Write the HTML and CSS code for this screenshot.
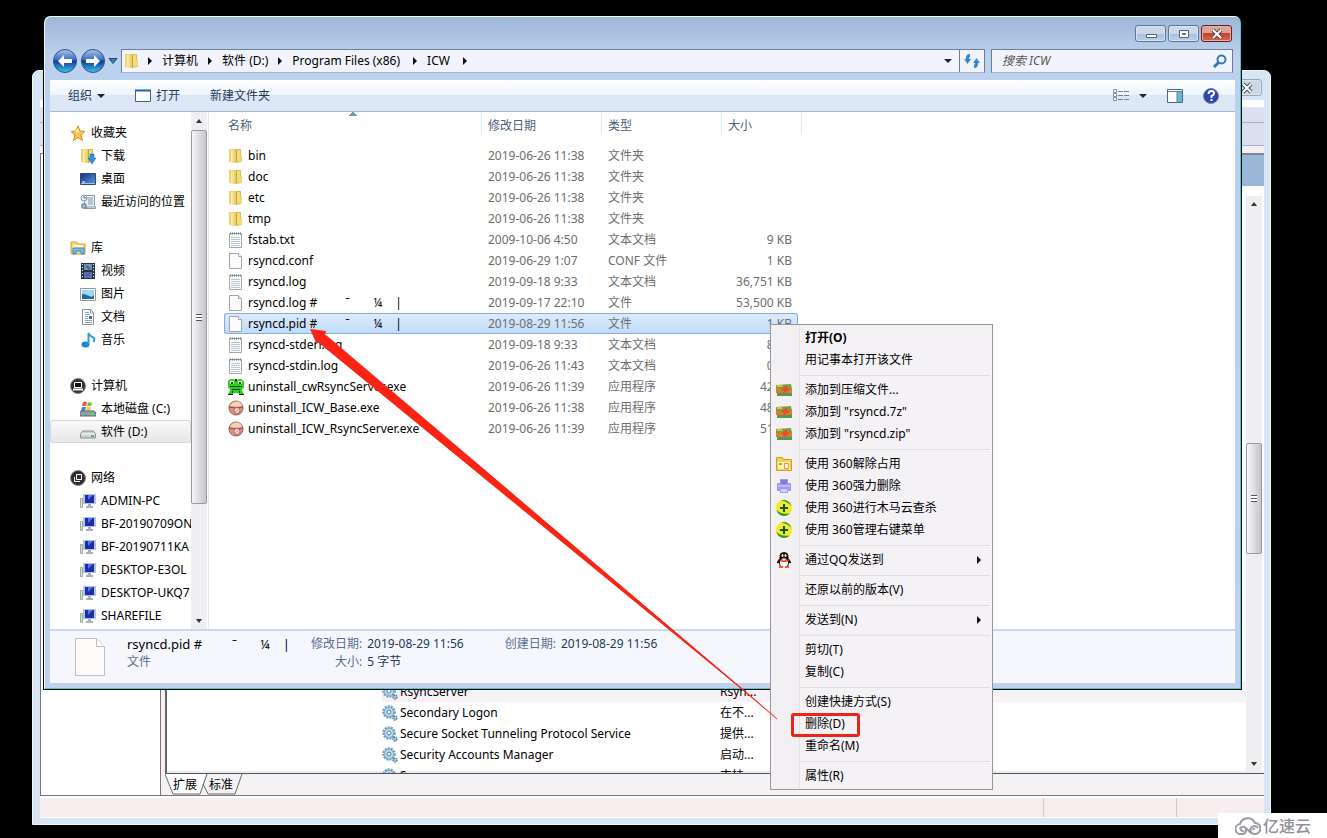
FILE: index.html
```html
<!DOCTYPE html>
<html lang="zh-CN">
<head>
<meta charset="utf-8">
<title>ICW</title>
<link rel="stylesheet" href="styles.css">
</head>
<body>
<svg class="sprite" aria-hidden="true">
  <defs>
    <linearGradient id="gold" x1="0" x2="1"><stop offset="0" stop-color="#faf0b4"/><stop offset="1" stop-color="#e6c95c"/></linearGradient>
    <linearGradient id="orb" x1="0" y1="0" x2="0" y2="1"><stop offset="0" stop-color="#a9c6ec"/><stop offset=".45" stop-color="#3a6cc0"/><stop offset=".5" stop-color="#0d3a94"/><stop offset="1" stop-color="#3fc4f4"/></linearGradient>
    <linearGradient id="screen" x1="0" y1="0" x2="1" y2="1"><stop offset="0" stop-color="#16307e"/><stop offset="1" stop-color="#5b9be0"/></linearGradient>
  </defs>
  <symbol id="folder" viewBox="0 0 16 16"><path d="M1 1h6l1 1v13l-7-1z" fill="#ecd474"/><path d="M8 1h5v6h1v6l-1 1-5 1z" fill="#dfbd4c"/><path d="M3 2l5-1v13l-3 1-2-1z" fill="url(#gold)"/><path d="M8.500 2v12" stroke="#c9a238"/><path d="M9 2h3v10l-3 2z" fill="#f1dc83"/><path d="M11 7h3v6l-3 1z" fill="#f0d974"/></symbol>
  <symbol id="text" viewBox="0 0 16 16"><path d="M1.500 1.500h12v14h-12z" fill="#fbfcfe" stroke="#a3a5aa"/><path d="M2 1.500h12" stroke="#777" stroke-width="2" stroke-dasharray="1 1"/><path d="M3 5.500h9M3 7.500h9M3 9.500h9M3 11.500h9M3 13.500h9" stroke="#bcc7d6"/></symbol>
  <symbol id="blank" viewBox="0 0 16 16"><path d="M1.500.5h9l3 3v12h-12z" fill="#fdfbfc" stroke="#a3a4aa"/><path d="M10.500.5v3h3" fill="#fff" stroke="#a3a4aa"/></symbol>
  <symbol id="frog" viewBox="0 0 16 16"><path d="M0 3q0-3 4-3t3 2h2q0-2 3-2t4 3v6l-2 1v2l2 3h-5l-1-1H6l-1 1H0l2-3v-2L0 9z" fill="#2bd01f"/><path d="M2 2h4v3H2zM10 2h4v3h-4z" fill="#d9ffd0"/><path d="M3 3h2v2H3zM11 3h2v2h-2zM2 7h12v1H2zM4 10h8v1H4zM0 15h5v1H0zM11 15h5v1h-5zM7 0h2v2H7zM4 12h1v2H4zM11 12h1v2h-1z" fill="#0b3d0a"/></symbol>
  <symbol id="setup" viewBox="0 0 16 16"><circle cx="8" cy="8" r="7" fill="#d99485" stroke="#9c5d50"/><path d="M2 6q1-4 6-4.500T14 6q-6 1-12 0z" fill="#f3d2b2"/><path d="M1 7q7 2 14 0" fill="none" stroke="#8a4a3f"/><circle cx="9" cy="10.500" r="3" fill="#f6e3dd" stroke="#c4564c"/><path d="M8 11.500l2-2" stroke="#c4564c"/></symbol>
  <symbol id="star" viewBox="0 0 16 16"><path d="M8 1l2 5 5 .5-4 3.500 1.500 5.500L8 12.500 3.500 15.500 5 10 1 6.500 6 6z" fill="#fbc94b" stroke="#d9861d"/><path d="M8 3l1 4-4 0z" fill="#fff0aa"/></symbol>
  <symbol id="download" viewBox="0 0 16 16"><use href="#folder"/><path d="M10 6h4v4h2l-4 6-4-6h2z" fill="#2a93dc" stroke="#1469ac" stroke-width=".5"/></symbol>
  <symbol id="desktop" viewBox="0 0 16 16"><path d="M.5 2.500h15v11H.5z" fill="url(#screen)" stroke="#33476e"/><path d="M1 12.500h14" stroke="#9ec1ea"/><path d="M2 11h3" stroke="#fff"/></symbol>
  <symbol id="recent" viewBox="0 0 16 16"><path d="M4.500 1.500h10v11h1v2h-11z" fill="#edf2f7" stroke="#8799ad"/><path d="M7 4h6M8 6h5M8 8h5M8 10h5M5 13h9" stroke="#8296ad"/><circle cx="4" cy="4" r="3" fill="#eef3f7" stroke="#8b99a8"/><path d="M4 2v2h2M2 10h4v4H2z" fill="#b6c4d2" stroke="#5f7388"/></symbol>
  <symbol id="library" viewBox="0 0 16 16"><path d="M1 2h6l1 2h7v10H1z" fill="#f4d874" stroke="#cda43a"/><path d="M3 5h10v4H3z" fill="#fff5c4"/><path d="M3 8h11v6h-3v-3H6v3H3z" fill="#79bde9" stroke="#3c86c0"/></symbol>
  <symbol id="video" viewBox="0 0 16 16"><path d="M1 0h14v16H1z" fill="#243447"/><path d="M4 1h8v6H4z" fill="#509fd2"/><path d="M4 9h8v6H4z" fill="#3b79c5"/><path d="M2.500 1v15M13.500 1v15" stroke="#fff" stroke-dasharray="1 2"/><path d="M6 3l4 3M6 13l4-3" stroke="#a63d43" stroke-width="2"/></symbol>
  <symbol id="picture" viewBox="0 0 16 16"><path d="M.5 2.500h15v12H.5z" fill="#fff" stroke="#8e99a8"/><path d="M2 4h12v9H2z" fill="#9bd6f5"/><path d="M2 8q4 0 7 2t5-1v4H2z" fill="#1a718a"/><path d="M2 11h12v2H2z" fill="#2a62a8"/></symbol>
  <symbol id="document" viewBox="0 0 16 16"><path d="M2.500.5h8l3 3v12h-11z" fill="#fff" stroke="#8593a4"/><path d="M10.500 1v3h3M5 3.500h4M5 5.500h5M5 7.500h3M5 9.500h3M5 11.500h7M5 13.500h7" stroke="#8aa1bc" fill="none"/><path d="M9 7h3v3H9z" fill="#426caa"/></symbol>
  <symbol id="music" viewBox="0 0 16 16"><ellipse cx="5.500" cy="12.500" rx="4" ry="3" fill="#1d87ce"/><path d="M8.500 12V1q1 3 4 4t1 5" fill="none" stroke="#2e9add" stroke-width="2"/></symbol>
  <symbol id="computer" viewBox="0 0 16 16"><circle cx="8" cy="8" r="7.500" fill="#332f34" stroke="#8a7e83"/><path d="M4.500 4.500h7v5h-7z" fill="#111" stroke="#fff"/><path d="M3 11.500h10" stroke="#fff" stroke-width="2"/></symbol>
  <symbol id="network" viewBox="0 0 16 16"><circle cx="8" cy="8" r="7.500" fill="#302c30" stroke="#90868a"/><path d="M6.500 4.500h5v5h-5zM4.500 7v4.500H10" fill="none" stroke="#fff"/></symbol>
  <symbol id="system" viewBox="0 0 16 16"><path d="M3 1q2-1 4 0l-1 4H2z" fill="#ee5b2b"/><path d="M8 1q2 1 4 0l-1 4H7z" fill="#78bd31"/><path d="M2 6h4l-1 4H1z" fill="#3a83dc"/><path d="M7 6h4l-1 4H6z" fill="#fac832"/><path d="M1 10h13l2 2v3H0v-3z" fill="#8ba2ac" stroke="#566970"/><path d="M11 13h3" stroke="#55e444" stroke-width="2"/></symbol>
  <symbol id="drive" viewBox="0 0 16 16"><path d="M.5 10l2-3h11l2 3v4H.5z" fill="#ccd0d4" stroke="#8a9096"/><path d="M1 10h14" stroke="#fff"/><path d="M11 12h3" stroke="#54b94c" stroke-width="2"/></symbol>
  <symbol id="pc" viewBox="0 0 16 16"><path d="M.5 5.500h2v9h-2z" fill="#dce2dd" stroke="#9aae9d"/><path d="M3 1h13v10H3z" fill="#b8c3d5"/><path d="M5 2h9v8H5z" fill="#1c2cb0"/><path d="M8 2h5l-5 5z" fill="#5577e4"/><path d="M8 11h3v2h2v2H6v-2h2z" fill="#a7b1bd"/></symbol>
  <symbol id="zip" viewBox="0 0 16 16"><path d="M0 3l15-1 1 5H0z" fill="#78a33a"/><path d="M0 7h16v5l-16-1z" fill="#de7c2e"/><path d="M1 11h15v3H1z" fill="#4f9b55"/><path d="M11 3L5 8l3 1-1 3 7-5-3-1z" fill="#ef4b2b"/><path d="M1 4h5" stroke="#e8b84b" stroke-width="2"/></symbol>
  <symbol id="unlock" viewBox="0 0 16 16"><path d="M.5 1.500h6l1 2h8v11H.5z" fill="#f6cf62" stroke="#d69a2a"/><path d="M2 6h12v7H2z" fill="#fff0ae"/><path d="M8.500 7.500h4v5h-4z" fill="#fff" stroke="#df9b28"/><path d="M3 8h3" stroke="#74bf4d" stroke-width="2"/></symbol>
  <symbol id="shred" viewBox="0 0 16 16"><path d="M4 1h8v4h3v8h-3v2H4v-2H1V5h3z" fill="#a09bf0"/><path d="M5 2h6v4H5z" fill="#7f79e4"/><path d="M2 7h12v2H2z" fill="#bcb8ff"/><path d="M5 11h6v3H5z" fill="#d0ceff"/></symbol>
  <symbol id="plus" viewBox="0 0 16 16"><circle cx="8" cy="8" r="8" fill="#f3e822"/><path d="M5 .5A8 8 0 0 1 15.500 6Q11 1 5 .5zM.5 10A8 8 0 0 0 14 13.500Q6 15 .5 10z" fill="#2f9d33"/><path d="M8 4v8M4 8h8" stroke="#14551f" stroke-width="2"/></symbol>
  <symbol id="qq" viewBox="0 0 16 16"><path d="M8 0Q3 0 3.500 6L1 10q0 2 2 1l1 4h8l1-4q2 1 2-1l-2.500-4Q13 0 8 0z" fill="#17100f"/><ellipse cx="8" cy="11" rx="4" ry="4" fill="#fff"/><path d="M3 7q5 3 10 0v2q-5 2-9 0z" fill="#e62822"/><ellipse cx="6.500" cy="3.500" rx="1" ry="1.500" fill="#fff"/><ellipse cx="9.500" cy="3.500" rx="1" ry="1.500" fill="#fff"/><path d="M5 6h6l-3 1z" fill="#f6ae22"/><path d="M3 15h4M9 15h4" stroke="#ef6020" stroke-width="2"/></symbol>
  <symbol id="gear" viewBox="0 0 16 16"><circle cx="7" cy="7" r="5.500" fill="#b6d6ea" stroke="#6d9ebd" stroke-width="2.500" stroke-dasharray="2 1"/><circle cx="7" cy="7" r="4.500" fill="#c3e0ef" stroke="#7fabc8"/><circle cx="7" cy="7" r="2" fill="#fff" stroke="#467a9d"/><circle cx="13" cy="13" r="2" fill="#a3c9e0" stroke="#5385a5" stroke-width="1.500" stroke-dasharray="1.500 .8"/></symbol>
  <symbol id="min" viewBox="0 0 16 12"><path d="M3.500 6.500h10v3h-10z" fill="#fff" stroke="#596474"/></symbol>
  <symbol id="max" viewBox="0 0 16 12"><path d="M3.500 2.500h9v7h-9z" fill="#fff" stroke="#596474"/><path d="M6.500 5.500h3v1h-3z" fill="#8aa5c8" stroke="#596474"/></symbol>
  <symbol id="close" viewBox="0 0 16 12"><path d="M4 2l8 8M12 2l-8 8" stroke="#4c525d" stroke-width="4"/><path d="M4 2l8 8M12 2l-8 8" stroke="#fff" stroke-width="2"/></symbol>
</svg>

<main class="desktop">
  <section class="window services" aria-label="服务">
    <button class="caption ghost" aria-label="关闭服务"><svg><use href="#close"/></svg></button>
    <div class="services-body">
      <div class="bar menu-bar"></div><div class="bar tool-bar"></div>
      <div class="panes">
        <div class="tree"></div>
        <div class="service-pane">
          <div class="blue-head"></div>
          <div class="service-view">
            <div class="service-list">
              <div class="service chosen"><svg><use href="#gear"/></svg><span>RsyncServer</span><span>Rsyn...</span></div>
              <div class="service"><svg><use href="#gear"/></svg><span>Secondary Logon</span><span>在不...</span></div>
              <div class="service"><svg><use href="#gear"/></svg><span>Secure Socket Tunneling Protocol Service</span><span>提供...</span></div>
              <div class="service"><svg><use href="#gear"/></svg><span>Security Accounts Manager</span><span>启动...</span></div>
              <div class="service"><svg><use href="#gear"/></svg><span>Server</span><span>支持...</span></div>
            </div>
            <div class="scroll back-scroll"><i class="up"></i><div class="thumb"><i></i></div><i class="down"></i></div>
          </div>
          <div class="tabs">
            <svg class="tab-lines" viewBox="0 0 80 21"><path d="M0 0h40l-5 20H8z" fill="#fff"/><path d="M0 0l8 20h27l7-20M38 10l5 10h27l7-20" fill="none" stroke="#666"/></svg>
            <button>扩展</button><button>标准</button>
          </div>
        </div>
      </div>
      <div class="status"><span></span><span></span></div>
    </div>
  </section>

  <section class="window explorer" aria-label="ICW">
    <header class="title">
      <button class="caption" aria-label="最小化"><svg><use href="#min"/></svg></button><button class="caption" aria-label="最大化"><svg><use href="#max"/></svg></button><button class="caption red" aria-label="关闭"><svg><use href="#close"/></svg></button>
    </header>
    <div class="address-row">
      <div class="history">
        <button aria-label="后退"><svg viewBox="0 0 26 26"><circle cx="13" cy="13" r="11.500" fill="url(#orb)" stroke="#34517f"/><path d="M6 13l6-6v4h8v4h-8v4z" fill="#fff"/></svg></button>
        <button aria-label="前进"><svg viewBox="0 0 26 26"><circle cx="13" cy="13" r="11.500" fill="url(#orb)" stroke="#34517f"/><path d="M20 13l-6-6v4H6v4h8v4z" fill="#fff"/></svg></button>
        <button class="drop" aria-label="历史"><svg viewBox="0 0 10 8"><path d="M1 1.500h8L5 6.500z" fill="#3e82bf" stroke="#1e4277"/></svg></button>
      </div>
      <nav class="address" aria-label="路径">
        <svg class="icon"><use href="#folder"/></svg><i class="right"></i>
        <button>计算机</button><i class="right"></i><button>软件 (D:)</button><i class="right"></i><button class="latin">Program Files (x86)</button><i class="right"></i><button class="latin">ICW</button><i class="right"></i>
        <i class="caret end"></i>
        <button class="refresh" aria-label="刷新"><svg viewBox="0 0 16 16"><path d="M0 6h2V5q0-4 4-4v3q-1 0-1 2h2l-3.500 5zM9 10l3.500-5 3.500 5h-2v1q0 4-4 4v-3q1 0 1-2z" fill="#3489c8"/></svg></button>
      </nav>
      <label class="search"><input type="text" placeholder="搜索 ICW" aria-label="搜索 ICW"><svg viewBox="0 0 16 16"><circle cx="9.500" cy="6.500" r="4" fill="none" stroke="#3477b4" stroke-width="2"/><path d="M6.500 9.500L2 14" stroke="#3477b4" stroke-width="3"/></svg></label>
    </div>
    <div class="commands">
      <button class="organize">组织 <i class="caret"></i></button>
      <button class="open"><svg viewBox="0 0 16 14"><path d="M.5 1.500h15v11H.5z" fill="#fff" stroke="#426489"/><path d="M0 1.500h16" stroke="#245f97" stroke-width="2"/></svg>打开</button>
      <button>新建文件夹</button>
      <div class="views">
        <button aria-label="更改视图"><svg viewBox="0 0 16 16"><path d="M.5 1.500h3v3h-3zM.5 5.500h3v3h-3zM.5 9.500h3v3h-3z" fill="#fff" stroke="#7e8ea3"/><path d="M5 3.500h5M11 3.500h5M5 7.500h5M11 7.500h5M5 11.500h5M11 11.500h5" stroke="#71839c"/></svg><i class="caret"></i></button>
        <button aria-label="预览窗格"><svg viewBox="0 0 16 16"><path d="M.5 1.500h15v13H.5z" fill="#fff" stroke="#4d6580"/><path d="M10 4h5v10h-5z" fill="#66b9d8"/><path d="M1 3.500h14M10 3v11" stroke="#687f99"/></svg></button>
        <button aria-label="帮助"><svg viewBox="0 0 16 16"><circle cx="8" cy="8" r="7.500" fill="#2845ad" stroke="#7c849a"/><path d="M5.500 6q0-3 3-3t2.500 2.500Q11 7 8.500 8v2M8.500 11v2" fill="none" stroke="#fff" stroke-width="2"/></svg></button>
      </div>
    </div>
    <div class="content">
      <aside class="side">
        <nav class="places" aria-label="导航">
          <div class="group"><a href="#" class="root"><svg><use href="#star"/></svg>收藏夹</a><a href="#"><svg><use href="#download"/></svg>下载</a><a href="#"><svg><use href="#desktop"/></svg>桌面</a><a href="#"><svg><use href="#recent"/></svg>最近访问的位置</a></div>
          <div class="group"><a href="#" class="root"><svg><use href="#library"/></svg>库</a><a href="#"><svg><use href="#video"/></svg>视频</a><a href="#"><svg><use href="#picture"/></svg>图片</a><a href="#"><svg><use href="#document"/></svg>文档</a><a href="#"><svg><use href="#music"/></svg>音乐</a></div>
          <div class="group"><a href="#" class="root"><svg><use href="#computer"/></svg>计算机</a><a href="#"><svg><use href="#system"/></svg>本地磁盘 (C:)</a><a href="#" class="current"><svg><use href="#drive"/></svg>软件 (D:)</a></div>
          <div class="group"><a href="#" class="root"><svg><use href="#network"/></svg>网络</a><a href="#"><svg><use href="#pc"/></svg>ADMIN-PC</a><a href="#"><svg><use href="#pc"/></svg>BF-20190709ON</a><a href="#"><svg><use href="#pc"/></svg>BF-20190711KA</a><a href="#"><svg><use href="#pc"/></svg>DESKTOP-E3OL</a><a href="#"><svg><use href="#pc"/></svg>DESKTOP-UKQ7</a><a href="#"><svg><use href="#pc"/></svg>SHAREFILE</a></div>
        </nav>
        <div class="scroll side-scroll"><i class="up"></i><div class="thumb"><i></i></div><i class="down"></i></div>
      </aside>
      <div class="files">
        <table>
          <colgroup><col class="c-name"><col class="c-date"><col class="c-type"><col class="c-size"><col class="c-end"></colgroup>
          <thead><tr><th class="sorted">名称</th><th>修改日期</th><th>类型</th><th>大小</th><th></th></tr></thead>
          <tbody>
            <tr><td><svg><use href="#folder"/></svg>bin</td><td>2019-06-26 11:38</td><td>文件夹</td><td></td><td></td></tr>
            <tr><td><svg><use href="#folder"/></svg>doc</td><td>2019-06-26 11:38</td><td>文件夹</td><td></td><td></td></tr>
            <tr><td><svg><use href="#folder"/></svg>etc</td><td>2019-06-26 11:38</td><td>文件夹</td><td></td><td></td></tr>
            <tr><td><svg><use href="#folder"/></svg>tmp</td><td>2019-06-26 11:38</td><td>文件夹</td><td></td><td></td></tr>
            <tr><td><svg><use href="#text"/></svg>fstab.txt</td><td>2009-10-06 4:50</td><td>文本文档</td><td>9 KB</td><td></td></tr>
            <tr><td><svg><use href="#blank"/></svg>rsyncd.conf</td><td>2019-06-29 1:07</td><td>CONF 文件</td><td>1 KB</td><td></td></tr>
            <tr><td><svg><use href="#text"/></svg>rsyncd.log</td><td>2019-09-18 9:33</td><td>文本文档</td><td>36,751 KB</td><td></td></tr>
            <tr><td><svg><use href="#blank"/></svg>rsyncd.log #<span class="odd"><span>ˉ</span><span>¼</span><span>|</span></span></td><td>2019-09-17 22:10</td><td>文件</td><td>53,500 KB</td><td></td></tr>
            <tr class="picked"><td><svg><use href="#blank"/></svg>rsyncd.pid #<span class="odd"><span>ˉ</span><span>¼</span><span>|</span></span></td><td>2019-08-29 11:56</td><td>文件</td><td>1 KB</td><td></td></tr>
            <tr><td><svg><use href="#text"/></svg>rsyncd-stderr.log</td><td>2019-09-18 9:33</td><td>文本文档</td><td>8 KB</td><td></td></tr>
            <tr><td><svg><use href="#text"/></svg>rsyncd-stdin.log</td><td>2019-06-26 11:43</td><td>文本文档</td><td>0 KB</td><td></td></tr>
            <tr><td><svg><use href="#frog"/></svg>uninstall_cwRsyncServer.exe</td><td>2019-06-26 11:39</td><td>应用程序</td><td>42 KB</td><td></td></tr>
            <tr><td><svg><use href="#setup"/></svg>uninstall_ICW_Base.exe</td><td>2019-06-26 11:38</td><td>应用程序</td><td>48 KB</td><td></td></tr>
            <tr><td><svg><use href="#setup"/></svg>uninstall_ICW_RsyncServer.exe</td><td>2019-06-26 11:39</td><td>应用程序</td><td>51 KB</td><td></td></tr>
          </tbody>
        </table>
      </div>
    </div>
    <footer class="details">
      <svg class="page" viewBox="0 0 32 40"><path d="M1.500 1.500h21l8 8v29h-29z" fill="#fefafa" stroke="#bdbcc4"/><path d="M22.500 1.500v8h8" fill="#fff" stroke="#bdbcc4"/></svg>
      <div class="summary"><div class="file">rsyncd.pid #<span class="odd"><span>ˉ</span><span>¼</span><span>|</span></span></div><div class="muted">文件</div></div>
      <dl><dt>修改日期:</dt><dd>2019-08-29 11:56</dd><dt>大小:</dt><dd>5 字节</dd></dl>
      <dl class="created"><dt>创建日期:</dt><dd>2019-08-29 11:56</dd></dl>
    </footer>
  </section>

  <div class="context" role="menu">
    <div><button role="menuitem"><b>打开(O)</b></button><button role="menuitem">用记事本打开该文件</button></div>
    <div><button role="menuitem"><svg><use href="#zip"/></svg>添加到压缩文件...</button><button role="menuitem"><svg><use href="#zip"/></svg>添加到 "rsyncd.7z"</button><button role="menuitem"><svg><use href="#zip"/></svg>添加到 "rsyncd.zip"</button></div>
    <div><button role="menuitem"><svg><use href="#unlock"/></svg>使用 360解除占用</button><button role="menuitem"><svg><use href="#shred"/></svg>使用 360强力删除</button><button role="menuitem"><svg><use href="#plus"/></svg>使用 360进行木马云查杀</button><button role="menuitem"><svg><use href="#plus"/></svg>使用 360管理右键菜单</button></div>
    <div><button role="menuitem"><svg><use href="#qq"/></svg>通过QQ发送到<i class="right"></i></button></div>
    <div><button role="menuitem">还原以前的版本(V)</button></div>
    <div><button role="menuitem">发送到(N)<i class="right"></i></button></div>
    <div><button role="menuitem">剪切(T)</button><button role="menuitem">复制(C)</button></div>
    <div><button role="menuitem">创建快捷方式(S)</button><button role="menuitem" class="marked">删除(D)</button><button role="menuitem">重命名(M)</button></div>
    <div><button role="menuitem">属性(R)</button></div>
  </div>

  <svg class="arrow" viewBox="0 0 468 391" aria-hidden="true"><path d="M0 0l16 2-1 4L468 390 9 13l-3 1z" fill="#fb2414"/><path d="M16 6L468 390 9 14z" fill="#fb2414"/><path d="M300 248L467 390" stroke="#fb2414"/></svg>

  <div class="watermark"><svg viewBox="0 0 26 20"><path d="M7 18H6a5 5 0 0 1-1-10 8 8 0 0 1 15-1 5.500 5.500 0 0 1 0 11 4 4 0 1 1 3-6M7 18a4 4 0 0 0 4-5q-1-3-4-2t-1 3 3 1M18 14q1-2 2-1M11 12l5 5" fill="none" stroke="#9a9aa5" stroke-width="2"/></svg><span>亿速云</span></div>
</main>
</body>
</html>
```
FILE: styles.css
```css
*, *::after { box-sizing: border-box; }
body { margin: 0; background: #000; color: #000; font: 12px/22px "Noto Sans", "Noto Sans CJK SC", sans-serif; }
button, input { font: inherit; color: inherit; border: 0; background: none; padding: 0; margin: 0; }
a { color: inherit; text-decoration: none; }
.sprite { position: absolute; width: 0; height: 0; }
svg { width: 16px; height: 16px; flex: none; display: block; }
.desktop { position: relative; height: 100vh; overflow: hidden; }
.window { position: absolute; display: flex; flex-direction: column; }

.right { width: 0; height: 0; border: 4px solid transparent; border-left-color: #111; border-right: 0; }
.caret { width: 0; height: 0; border: 4px solid transparent; border-top-color: #14274b; border-bottom: 0; }

/* services window */
.services { inset: 70px 56px 13px 32px; padding: 8px 6px 6px 7px; background: #d8e5f4; border: 1px solid #eef5fb; border-radius: 7px 7px 0 0; }
.caption { width: 31px; height: 17px; display: grid; place-items: center; border: 1px solid #5f7592; border-radius: 3px; background: linear-gradient(#c9d9ee 50%, #a4bedd 50%, #bdd1ea); box-shadow: inset 0 0 0 1px #d8e5f5; }
.caption svg { height: 12px; }
.caption.red { background: linear-gradient(#e0a294 48%, #c4402a 50%, #d9694c); border-color: #5b1f25; box-shadow: inset 0 0 0 1px #eab0a3; }
.caption.ghost { align-self: flex-end; margin-right: 2px; background: #cbd8e8; border-color: #97a6ba; flex: none; }
.services-body { flex: 1; display: flex; flex-direction: column; margin-top: 4px; min-height: 0; background: #f5f2f6; }
.bar { flex: none; height: 23px; border-bottom: 1px solid #aaafcd; background: #dcdff0; }
.menu-bar { background: linear-gradient(#fff 30%, #dcdff0 35%); }
.panes { flex: 1; min-height: 0; display: flex; padding-top: 7px; gap: 4px; background: #f7efef; border-bottom: 1px solid #777; }
.tree { width: 121px; background: #fff; border: 1px solid #777; border-bottom: 0; }
.service-pane { flex: 1; display: flex; flex-direction: column; min-width: 0; background: #f5f2f6; }
.blue-head { flex: none; height: 33px; background: #9cb6d8; border-top: 2px solid #7a8793; }
.service-view { flex: 1; min-height: 0; display: flex; overflow: hidden; background: #fff; border-left: 2px solid #666; border-bottom: 1px solid #555; box-shadow: inset 0 -2px #ececf0; }
.service-list { flex: 1; align-self: flex-end; margin-bottom: -13px; padding-left: 215px; }
.service { display: flex; align-items: center; gap: 2px; height: 21px; }
.service span:first-of-type { width: 318px; }
.service.chosen { background: #f6f2f6; }
.tabs { flex: none; position: relative; display: flex; gap: 12px; height: 21px; padding-left: 8px; line-height: 20px; }
.tabs button { position: relative; width: 24px; }
.tab-lines { position: absolute; left: 0; top: 0; width: 80px; height: 21px; }
.status { flex: none; height: 22px; border: solid #fff; border-width: 2px 0 1px; display: flex; justify-content: flex-end; background: #f6eeee; }
.status span { width: 133px; border-left: 1px solid #cfcaca; }
.status span:last-child { width: 88px; }

/* scroll bars */
.scroll { display: flex; flex-direction: column; align-items: center; background: #efeff1; }
.scroll .up, .scroll .down { width: 0; height: 0; border: 3px solid transparent; }
.scroll .up { border-bottom: 4px solid #333; border-top: 0; }
.scroll .down { border-top: 4px solid #333; border-bottom: 0; }
.thumb { width: 100%; display: grid; place-items: center; border: 1px solid #9a9a9e; border-radius: 2px; background: linear-gradient(90deg, #f7f7f8, #dedee1 50%, #c4c4ca); }
.thumb i { width: 6px; height: 7px; background: repeating-linear-gradient(#555 0 1px, #fff 1px 3px); }
.back-scroll { width: 16px; margin: 10px 2px 1px 0; padding: 6px 0 6px; justify-content: space-between; }
.back-scroll .thumb { height: 111px; margin-top: 28px; }
.side-scroll { width: 16px; padding: 7px 0 6px; }
.side-scroll .thumb { height: 374px; margin: 7px 0 auto; }

/* explorer window */
.explorer { inset: 16px 85px 148px 43px; padding: 0 6px 6px; background: linear-gradient(#9bb6d6, #bcd1ee 40px, #bfd1ec); border: solid #000; border-width: 0 1px 1px; border-radius: 7px 7px 0 0; box-shadow: inset 1px 1px #f5f9fd, inset -1px -1px #43c9d2; }
.title { flex: none; height: 33px; display: flex; justify-content: flex-end; gap: 2px; padding: 9px 3px 0 0; }
.address-row { flex: none; height: 31px; display: flex; align-items: flex-start; padding-right: 2px; }
.history { width: 71px; height: 24px; display: flex; align-items: center; padding-left: 2px; gap: 2px; }
.history svg { width: 26px; height: 26px; }
.history .drop svg { width: 10px; height: 8px; }
.address { flex: 1; height: 24px; display: flex; align-items: center; gap: 10px; padding-left: 2px; border: 1px solid #6b7d98; border-bottom-color: #a6b5ca; background: #f1f4fc; }
.address .icon { margin-right: -2px; }
.address .latin { padding-right: 3px; }
.address button:not(:last-child) { line-height: 20px; }
.address .end { margin-left: auto; margin-right: -3px; }
.refresh { height: 22px; padding: 0 4px; border-left: 1px solid #6b7d98; }
.search { width: 242px; height: 24px; margin-left: 6px; display: flex; align-items: center; padding: 0 4px 0 10px; border: 1px solid #6b7d98; border-bottom-color: #a6b5ca; background: #f1f4fc; }
.search input { flex: 1; min-width: 0; height: 22px; }
.search input::placeholder { color: #555; font-style: italic; opacity: 1; }
.commands { flex: none; height: 32px; display: flex; align-items: center; padding: 0 16px 0 18px; gap: 30px; color: #1e395b; background: linear-gradient(#fff, #edf5fd 48%, #dce6f5 50%, #dfe8f6); border-bottom: 1px solid #a9b7cc; }
.commands button { display: flex; align-items: center; gap: 5px; }
.views { margin-left: auto; display: flex; gap: 20px; }
.views button:first-child { gap: 10px; }
.content { flex: 1; min-height: 0; display: flex; background: #fff; }
.side { width: 159px; display: flex; border-right: 1px solid #e2eaf5; padding-right: 1px; }
.places { flex: 1; min-width: 0; overflow: hidden; padding-top: 9px; }
.group { margin-bottom: 23px; }
.group a { height: 23px; display: flex; align-items: center; gap: 5px; padding-left: 30px; white-space: nowrap; }
.group a.root { padding-left: 20px; }
.group .current { background: linear-gradient(#fafafb, #e6e6e8); box-shadow: inset 0 0 0 1px #d9d9dc; border-radius: 3px; }
.files { flex: 1; min-width: 0; overflow: hidden; padding-left: 15px; }
table { table-layout: fixed; width: 578px; border-spacing: 0; }
.c-name { width: 257px; }
.c-date, .c-type { width: 120px; }
.c-size { width: 77px; }
.c-end { width: 4px; }
th { height: 33px; padding: 0 0 6px 6px; text-align: left; font-weight: 400; color: #4c607a; border: 0 solid; border-left-width: 1px; border-image: linear-gradient(#dbe7f3 60%, transparent 75%) 1; }
th:first-child { border: 0; padding-left: 4px; background: conic-gradient(from 135deg at 50% 0, #6f9cb5 90deg, transparent 0) center top / 8px 4px no-repeat; }
th:last-child { border-width: 0 1px 0 0; }
td { height: 21px; padding: 0 0 0 7px; line-height: 19px; color: #6d6d6d; white-space: nowrap; border: solid transparent; border-width: 1px 0; }
td:first-child { display: flex; align-items: center; gap: 4px; padding-left: 4px; color: #000; }
td:nth-child(4) { text-align: right; padding-right: 6px; }
td:last-child, th:last-child { padding: 0; }
.picked td:not(:last-child) { background: linear-gradient(#dcebfc, #c1dbfc); border-color: #84acdd; }
.picked td:first-child { border-left: 1px solid #84acdd; border-radius: 3px 0 0 3px; padding-left: 3px; }
.picked td:nth-child(4) { border-right: 1px solid #84acdd; border-radius: 0 3px 3px 0; padding-right: 5px; }
.odd { display: inline-flex; padding-left: 24px; gap: 13px; }
.odd span:first-child { width: 15px; }
.details { flex: none; height: 54px; display: flex; padding: 4px 24px; line-height: 18px; background: #f5f7fd; border-top: 2px solid #ccd9ea; color: #1e395b; }
.page { width: 32px; height: 40px; margin-top: 2px; }
.summary { margin-left: 21px; width: 184px; }
.file { color: #000; font-size: 13px; white-space: nowrap; }
.file .odd { padding-left: 30px; }
.muted, dt { color: #5a6e8c; }
dl { margin: 0; display: grid; grid-template-columns: auto auto; gap: 0 5px; align-content: start; }
dt { text-align: right; }
dd { margin: 0; }
.created { margin-left: 41px; }

/* context menu */
.context { position: absolute; left: 770px; top: 324px; width: 223px; padding: 2px; border: 1px solid #979797; background: #f5f2f6; box-shadow: inset 28px 0 #f3f0f4, inset 29px 0 #e2e3e3; }
.context div + div { margin-top: 4px; border-top: 1px solid; padding-top: 3px; border-image: linear-gradient(90deg, transparent 28px, #dedde2 28px) 1; }
.context button { position: relative; width: 100%; height: 22px; display: flex; align-items: center; padding-left: 32px; }
.context svg { margin: 0 13px 0 -29px; }
.context .right { margin-left: auto; margin-right: 9px; }
.marked::after { content: ""; position: absolute; left: 18px; top: 0; width: 69px; height: 24px; border: 3px solid #ee231b; border-radius: 3px; }
.arrow { position: absolute; left: 310px; top: 329px; width: 468px; height: 391px; pointer-events: none; }
.watermark { position: absolute; right: 0; bottom: 0; display: flex; align-items: center; gap: 2px; height: 25px; padding: 0 16px 0 17px; background: #fff; color: #8f8f9b; font-size: 16px; font-weight: 500; }
.watermark svg { width: 26px; height: 20px; }
```
